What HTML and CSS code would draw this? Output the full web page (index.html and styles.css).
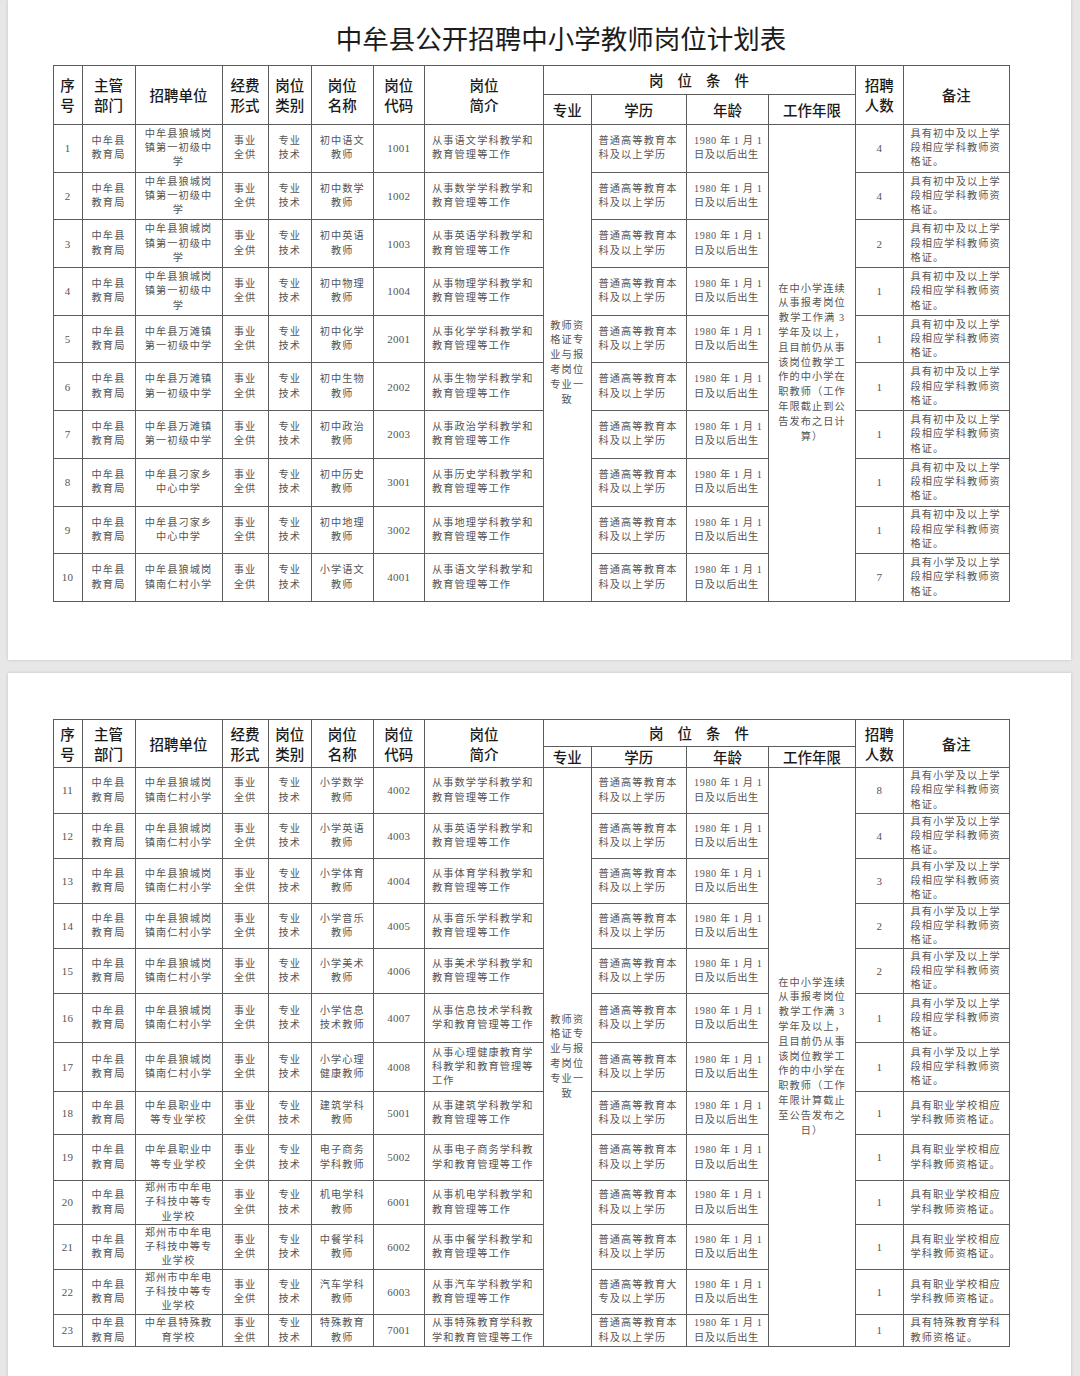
FILE: index.html
```html
<!DOCTYPE html>
<html lang="zh-CN">
<head>
<meta charset="utf-8">
<title>中牟县公开招聘中小学教师岗位计划表</title>
<link rel="stylesheet" href="styles.css">
</head>
<body>
<div class="screen">
  <section class="page page-first">
    <h1 class="title">中牟县公开招聘中小学教师岗位计划表</h1>
    <table class="plan plan-a">
      <colgroup>
        <col class="c-no"><col class="c-dept"><col class="c-unit"><col class="c-fund"><col class="c-type"><col class="c-name"><col class="c-code"><col class="c-desc"><col class="c-major"><col class="c-edu"><col class="c-age"><col class="c-years"><col class="c-num"><col class="c-note">
      </colgroup>
      <thead>
        <tr class="h-top">
          <th rowspan="2">序<br>号</th><th rowspan="2">主管<br>部门</th><th rowspan="2">招聘单位</th><th rowspan="2">经费<br>形式</th><th rowspan="2">岗位<br>类别</th><th rowspan="2">岗位<br>名称</th><th rowspan="2">岗位<br>代码</th><th rowspan="2">岗位<br>简介</th>
          <th colspan="4" class="spread">岗位条件</th>
          <th rowspan="2">招聘<br>人数</th><th rowspan="2">备注</th>
        </tr>
        <tr class="h-bot"><th>专业</th><th>学历</th><th>年龄</th><th>工作年限</th></tr>
      </thead>
      <tbody>
        <tr class="ra"><td class="n">1</td><td>中牟县<br>教育局</td><td>中牟县狼城岗<br>镇第一初级中<br>学</td><td>事业<br>全供</td><td>专业<br>技术</td><td>初中语文<br>教师</td><td class="n">1001</td><td class="l">从事语文学科教学和<br>教育管理等工作</td><td rowspan="10" class="merge">教师资<br>格证专<br>业与报<br>考岗位<br>专业一<br>致</td><td class="l">普通高等教育本<br>科及以上学历</td><td class="l age">1980 年 1 月 1<br>日及以后出生</td><td rowspan="10" class="merge">在中小学连续<br>从事报考岗位<br>教学工作满 3<br>学年及以上，<br>且目前仍从事<br>该岗位教学工<br>作的中小学在<br>职教师（工作<br>年限截止到公<br>告发布之日计<br>算）</td><td class="n">4</td><td class="l">具有初中及以上学<br>段相应学科教师资<br>格证。</td></tr>
        <tr class="ra"><td class="n">2</td><td>中牟县<br>教育局</td><td>中牟县狼城岗<br>镇第一初级中<br>学</td><td>事业<br>全供</td><td>专业<br>技术</td><td>初中数学<br>教师</td><td class="n">1002</td><td class="l">从事数学学科教学和<br>教育管理等工作</td><td class="l">普通高等教育本<br>科及以上学历</td><td class="l age">1980 年 1 月 1<br>日及以后出生</td><td class="n">4</td><td class="l">具有初中及以上学<br>段相应学科教师资<br>格证。</td></tr>
        <tr class="ra"><td class="n">3</td><td>中牟县<br>教育局</td><td>中牟县狼城岗<br>镇第一初级中<br>学</td><td>事业<br>全供</td><td>专业<br>技术</td><td>初中英语<br>教师</td><td class="n">1003</td><td class="l">从事英语学科教学和<br>教育管理等工作</td><td class="l">普通高等教育本<br>科及以上学历</td><td class="l age">1980 年 1 月 1<br>日及以后出生</td><td class="n">2</td><td class="l">具有初中及以上学<br>段相应学科教师资<br>格证。</td></tr>
        <tr class="ra"><td class="n">4</td><td>中牟县<br>教育局</td><td>中牟县狼城岗<br>镇第一初级中<br>学</td><td>事业<br>全供</td><td>专业<br>技术</td><td>初中物理<br>教师</td><td class="n">1004</td><td class="l">从事物理学科教学和<br>教育管理等工作</td><td class="l">普通高等教育本<br>科及以上学历</td><td class="l age">1980 年 1 月 1<br>日及以后出生</td><td class="n">1</td><td class="l">具有初中及以上学<br>段相应学科教师资<br>格证。</td></tr>
        <tr class="ra"><td class="n">5</td><td>中牟县<br>教育局</td><td>中牟县万滩镇<br>第一初级中学</td><td>事业<br>全供</td><td>专业<br>技术</td><td>初中化学<br>教师</td><td class="n">2001</td><td class="l">从事化学学科教学和<br>教育管理等工作</td><td class="l">普通高等教育本<br>科及以上学历</td><td class="l age">1980 年 1 月 1<br>日及以后出生</td><td class="n">1</td><td class="l">具有初中及以上学<br>段相应学科教师资<br>格证。</td></tr>
        <tr class="ra"><td class="n">6</td><td>中牟县<br>教育局</td><td>中牟县万滩镇<br>第一初级中学</td><td>事业<br>全供</td><td>专业<br>技术</td><td>初中生物<br>教师</td><td class="n">2002</td><td class="l">从事生物学科教学和<br>教育管理等工作</td><td class="l">普通高等教育本<br>科及以上学历</td><td class="l age">1980 年 1 月 1<br>日及以后出生</td><td class="n">1</td><td class="l">具有初中及以上学<br>段相应学科教师资<br>格证。</td></tr>
        <tr class="ra"><td class="n">7</td><td>中牟县<br>教育局</td><td>中牟县万滩镇<br>第一初级中学</td><td>事业<br>全供</td><td>专业<br>技术</td><td>初中政治<br>教师</td><td class="n">2003</td><td class="l">从事政治学科教学和<br>教育管理等工作</td><td class="l">普通高等教育本<br>科及以上学历</td><td class="l age">1980 年 1 月 1<br>日及以后出生</td><td class="n">1</td><td class="l">具有初中及以上学<br>段相应学科教师资<br>格证。</td></tr>
        <tr class="ra"><td class="n">8</td><td>中牟县<br>教育局</td><td>中牟县刁家乡<br>中心中学</td><td>事业<br>全供</td><td>专业<br>技术</td><td>初中历史<br>教师</td><td class="n">3001</td><td class="l">从事历史学科教学和<br>教育管理等工作</td><td class="l">普通高等教育本<br>科及以上学历</td><td class="l age">1980 年 1 月 1<br>日及以后出生</td><td class="n">1</td><td class="l">具有初中及以上学<br>段相应学科教师资<br>格证。</td></tr>
        <tr class="ra"><td class="n">9</td><td>中牟县<br>教育局</td><td>中牟县刁家乡<br>中心中学</td><td>事业<br>全供</td><td>专业<br>技术</td><td>初中地理<br>教师</td><td class="n">3002</td><td class="l">从事地理学科教学和<br>教育管理等工作</td><td class="l">普通高等教育本<br>科及以上学历</td><td class="l age">1980 年 1 月 1<br>日及以后出生</td><td class="n">1</td><td class="l">具有初中及以上学<br>段相应学科教师资<br>格证。</td></tr>
        <tr class="ra"><td class="n">10</td><td>中牟县<br>教育局</td><td>中牟县狼城岗<br>镇南仁村小学</td><td>事业<br>全供</td><td>专业<br>技术</td><td>小学语文<br>教师</td><td class="n">4001</td><td class="l">从事语文学科教学和<br>教育管理等工作</td><td class="l">普通高等教育本<br>科及以上学历</td><td class="l age">1980 年 1 月 1<br>日及以后出生</td><td class="n">7</td><td class="l">具有小学及以上学<br>段相应学科教师资<br>格证。</td></tr>
      </tbody>
    </table>
  </section>

  <section class="page page-second">
    <table class="plan plan-b">
      <colgroup>
        <col class="c-no"><col class="c-dept"><col class="c-unit"><col class="c-fund"><col class="c-type"><col class="c-name"><col class="c-code"><col class="c-desc"><col class="c-major"><col class="c-edu"><col class="c-age"><col class="c-years"><col class="c-num"><col class="c-note">
      </colgroup>
      <thead>
        <tr class="h-top">
          <th rowspan="2">序<br>号</th><th rowspan="2">主管<br>部门</th><th rowspan="2">招聘单位</th><th rowspan="2">经费<br>形式</th><th rowspan="2">岗位<br>类别</th><th rowspan="2">岗位<br>名称</th><th rowspan="2">岗位<br>代码</th><th rowspan="2">岗位<br>简介</th>
          <th colspan="4" class="spread">岗位条件</th>
          <th rowspan="2">招聘<br>人数</th><th rowspan="2">备注</th>
        </tr>
        <tr class="h-bot"><th>专业</th><th>学历</th><th>年龄</th><th>工作年限</th></tr>
      </thead>
      <tbody>
        <tr class="r46"><td class="n">11</td><td>中牟县<br>教育局</td><td>中牟县狼城岗<br>镇南仁村小学</td><td>事业<br>全供</td><td>专业<br>技术</td><td>小学数学<br>教师</td><td class="n">4002</td><td class="l">从事数学学科教学和<br>教育管理等工作</td><td rowspan="13" class="merge">教师资<br>格证专<br>业与报<br>考岗位<br>专业一<br>致</td><td class="l">普通高等教育本<br>科及以上学历</td><td class="l age">1980 年 1 月 1<br>日及以后出生</td><td rowspan="13" class="merge">在中小学连续<br>从事报考岗位<br>教学工作满 3<br>学年及以上，<br>且目前仍从事<br>该岗位教学工<br>作的中小学在<br>职教师（工作<br>年限计算截止<br>至公告发布之<br>日）</td><td class="n">8</td><td class="l">具有小学及以上学<br>段相应学科教师资<br>格证。</td></tr>
        <tr class="r45"><td class="n">12</td><td>中牟县<br>教育局</td><td>中牟县狼城岗<br>镇南仁村小学</td><td>事业<br>全供</td><td>专业<br>技术</td><td>小学英语<br>教师</td><td class="n">4003</td><td class="l">从事英语学科教学和<br>教育管理等工作</td><td class="l">普通高等教育本<br>科及以上学历</td><td class="l age">1980 年 1 月 1<br>日及以后出生</td><td class="n">4</td><td class="l">具有小学及以上学<br>段相应学科教师资<br>格证。</td></tr>
        <tr class="r45"><td class="n">13</td><td>中牟县<br>教育局</td><td>中牟县狼城岗<br>镇南仁村小学</td><td>事业<br>全供</td><td>专业<br>技术</td><td>小学体育<br>教师</td><td class="n">4004</td><td class="l">从事体育学科教学和<br>教育管理等工作</td><td class="l">普通高等教育本<br>科及以上学历</td><td class="l age">1980 年 1 月 1<br>日及以后出生</td><td class="n">3</td><td class="l">具有小学及以上学<br>段相应学科教师资<br>格证。</td></tr>
        <tr class="r45"><td class="n">14</td><td>中牟县<br>教育局</td><td>中牟县狼城岗<br>镇南仁村小学</td><td>事业<br>全供</td><td>专业<br>技术</td><td>小学音乐<br>教师</td><td class="n">4005</td><td class="l">从事音乐学科教学和<br>教育管理等工作</td><td class="l">普通高等教育本<br>科及以上学历</td><td class="l age">1980 年 1 月 1<br>日及以后出生</td><td class="n">2</td><td class="l">具有小学及以上学<br>段相应学科教师资<br>格证。</td></tr>
        <tr class="r45"><td class="n">15</td><td>中牟县<br>教育局</td><td>中牟县狼城岗<br>镇南仁村小学</td><td>事业<br>全供</td><td>专业<br>技术</td><td>小学美术<br>教师</td><td class="n">4006</td><td class="l">从事美术学科教学和<br>教育管理等工作</td><td class="l">普通高等教育本<br>科及以上学历</td><td class="l age">1980 年 1 月 1<br>日及以后出生</td><td class="n">2</td><td class="l">具有小学及以上学<br>段相应学科教师资<br>格证。</td></tr>
        <tr class="r49"><td class="n">16</td><td>中牟县<br>教育局</td><td>中牟县狼城岗<br>镇南仁村小学</td><td>事业<br>全供</td><td>专业<br>技术</td><td>小学信息<br>技术教师</td><td class="n">4007</td><td class="l">从事信息技术学科教<br>学和教育管理等工作</td><td class="l">普通高等教育本<br>科及以上学历</td><td class="l age">1980 年 1 月 1<br>日及以后出生</td><td class="n">1</td><td class="l">具有小学及以上学<br>段相应学科教师资<br>格证。</td></tr>
        <tr class="r49"><td class="n">17</td><td>中牟县<br>教育局</td><td>中牟县狼城岗<br>镇南仁村小学</td><td>事业<br>全供</td><td>专业<br>技术</td><td>小学心理<br>健康教师</td><td class="n">4008</td><td class="l">从事心理健康教育学<br>科教学和教育管理等<br>工作</td><td class="l">普通高等教育本<br>科及以上学历</td><td class="l age">1980 年 1 月 1<br>日及以后出生</td><td class="n">1</td><td class="l">具有小学及以上学<br>段相应学科教师资<br>格证。</td></tr>
        <tr class="r43"><td class="n">18</td><td>中牟县<br>教育局</td><td>中牟县职业中<br>等专业学校</td><td>事业<br>全供</td><td>专业<br>技术</td><td>建筑学科<br>教师</td><td class="n">5001</td><td class="l">从事建筑学科教学和<br>教育管理等工作</td><td class="l">普通高等教育本<br>科及以上学历</td><td class="l age">1980 年 1 月 1<br>日及以后出生</td><td class="n">1</td><td class="l">具有职业学校相应<br>学科教师资格证。</td></tr>
        <tr class="r46"><td class="n">19</td><td>中牟县<br>教育局</td><td>中牟县职业中<br>等专业学校</td><td>事业<br>全供</td><td>专业<br>技术</td><td>电子商务<br>学科教师</td><td class="n">5002</td><td class="l">从事电子商务学科教<br>学和教育管理等工作</td><td class="l">普通高等教育本<br>科及以上学历</td><td class="l age">1980 年 1 月 1<br>日及以后出生</td><td class="n">1</td><td class="l">具有职业学校相应<br>学科教师资格证。</td></tr>
        <tr class="r44"><td class="n">20</td><td>中牟县<br>教育局</td><td>郑州市中牟电<br>子科技中等专<br>业学校</td><td>事业<br>全供</td><td>专业<br>技术</td><td>机电学科<br>教师</td><td class="n">6001</td><td class="l">从事机电学科教学和<br>教育管理等工作</td><td class="l">普通高等教育本<br>科及以上学历</td><td class="l age">1980 年 1 月 1<br>日及以后出生</td><td class="n">1</td><td class="l">具有职业学校相应<br>学科教师资格证。</td></tr>
        <tr class="r45"><td class="n">21</td><td>中牟县<br>教育局</td><td>郑州市中牟电<br>子科技中等专<br>业学校</td><td>事业<br>全供</td><td>专业<br>技术</td><td>中餐学科<br>教师</td><td class="n">6002</td><td class="l">从事中餐学科教学和<br>教育管理等工作</td><td class="l">普通高等教育本<br>科及以上学历</td><td class="l age">1980 年 1 月 1<br>日及以后出生</td><td class="n">1</td><td class="l">具有职业学校相应<br>学科教师资格证。</td></tr>
        <tr class="r45"><td class="n">22</td><td>中牟县<br>教育局</td><td>郑州市中牟电<br>子科技中等专<br>业学校</td><td>事业<br>全供</td><td>专业<br>技术</td><td>汽车学科<br>教师</td><td class="n">6003</td><td class="l">从事汽车学科教学和<br>教育管理等工作</td><td class="l">普通高等教育大<br>专及以上学历</td><td class="l age">1980 年 1 月 1<br>日及以后出生</td><td class="n">1</td><td class="l">具有职业学校相应<br>学科教师资格证。</td></tr>
        <tr class="r32"><td class="n">23</td><td>中牟县<br>教育局</td><td>中牟县特殊教<br>育学校</td><td>事业<br>全供</td><td>专业<br>技术</td><td>特殊教育<br>教师</td><td class="n">7001</td><td class="l">从事特殊教育学科教<br>学和教育管理等工作</td><td class="l">普通高等教育本<br>科及以上学历</td><td class="l age">1980 年 1 月 1<br>日及以后出生</td><td class="n">1</td><td class="l">具有特殊教育学科<br>教师资格证。</td></tr>
      </tbody>
    </table>
  </section>
</div>
</body>
</html>
```

FILE: styles.css
```css
html, body {
  margin: 0;
  padding: 0;
  background: #e7e7e7;
}
body {
  height: 1376px;
  overflow: hidden;
}
.screen {
  display: flex;
  flex-direction: column;
  gap: 13px;
  padding: 0 9px 0 8px;
}
.page {
  background: #ffffff;
  box-shadow: 0 0 3px rgba(0, 0, 0, 0.16);
}
.page-first {
  height: 660px;
}
.page-second {
  height: 720px;
  padding-top: 46px;
  box-sizing: border-box;
}
.title {
  margin: 0;
  height: 65px;
  box-sizing: border-box;
  padding: 23px 0 0 43px;
  font-family: "Noto Sans CJK SC", sans-serif;
  font-weight: 400;
  font-size: 26.5px;
  line-height: 30px;
  text-align: center;
  color: #1c1c1c;
}
.plan {
  margin-left: 44.5px;
  width: 957px;
  table-layout: fixed;
  border-collapse: collapse;
}
.c-no { width: 29px; }
.c-dept { width: 53px; }
.c-unit { width: 87px; }
.c-fund { width: 46px; }
.c-type { width: 43.5px; }
.c-name { width: 61.5px; }
.c-code { width: 51.5px; }
.c-desc { width: 119px; }
.c-major { width: 47.5px; }
.c-edu { width: 95.5px; }
.c-age { width: 82px; }
.c-years { width: 87px; }
.c-num { width: 47.5px; }
.c-note { width: 106.5px; }

.plan th,
.plan td {
  border: 1px solid #5c5c5c;
  padding: 0 1px;
  text-align: center;
  vertical-align: middle;
  white-space: nowrap;
  overflow: visible;
}
.plan th {
  font-family: "Noto Sans CJK SC", sans-serif;
  font-weight: 500;
  font-size: 14.5px;
  line-height: 20px;
  color: #1a1a1a;
}
.plan th.spread {
  letter-spacing: 14px;
  padding-left: 14px;
}
.plan td {
  font-family: "Liberation Serif", "Noto Sans CJK SC", serif;
  font-weight: 400;
  font-size: 10.2px;
  line-height: 14.3px;
  letter-spacing: 1.1px;
  color: #555555;
}
.plan td.l {
  text-align: left;
  padding-left: 7px;
}
.plan td.age {
  letter-spacing: 0.6px;
}
.plan td.n {
  font-size: 11px;
  letter-spacing: 0.2px;
}
.plan td.merge {
  line-height: 14.8px;
}

.plan-a .h-top { height: 29px; }
.plan-a .h-bot { height: 30px; }
.plan-b .h-top { height: 27px; }
.plan-b .h-bot { height: 20px; }

.ra { height: 47.7px; }
.r32 { height: 32px; }
.r43 { height: 43px; }
.r44 { height: 44px; }
.r45 { height: 45px; }
.r46 { height: 46px; }
.r49 { height: 49px; }
```
